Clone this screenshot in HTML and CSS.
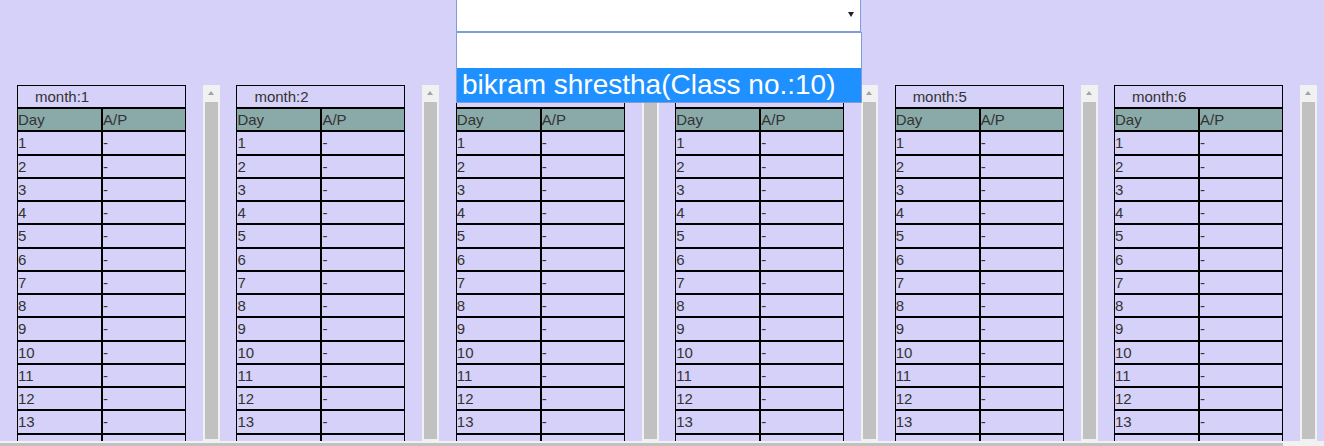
FILE: index.html
```html
<!DOCTYPE html>
<html>
<head>
<meta charset="utf-8">
<link rel="stylesheet" href="styles.css">
</head>
<body>
<div class="page">
  <div class="top">
    <div class="select"><span class="caret"></span></div>
    <div class="listbox">
      <div class="option"></div>
      <div class="option selected">bikram shrestha(Class no.:10)</div>
    </div>
  </div>
  <div class="panels" id="panels"></div>
</div>
<div class="hscroll"><div class="hthumb"></div></div>
<script src="app.js"></script>
</body>
</html>
```
FILE: app.js
```js
(function () {
  var wrap = document.getElementById('panels');
  var html = '';
  for (var m = 1; m <= 6; m++) {
    html += '<div class="panel"><table class="att"><colgroup><col class="c1"><col class="c2"></colgroup>';
    html += '<tr><th colspan="2" class="month">month:' + m + '</th></tr>';
    html += '<tr class="head"><td>Day</td><td>A/P</td></tr>';
    for (var d = 1; d <= 16; d++) {
      html += '<tr><td>' + d + '</td><td>-</td></tr>';
    }
    html += '</table><div class="vscroll"><div class="arrow"></div><div class="thumb"></div></div></div>';
  }
  wrap.innerHTML = html;
})();
```
FILE: styles.css
```css
html, body {
  margin: 0;
  padding: 0;
}
body {
  background: #d5d1f8;
  font-family: "Liberation Sans", Arial, sans-serif;
  color: #333;
  overflow: hidden;
  width: 1324px;
  height: 446px;
}
.page {
  height: 441px;
  overflow: hidden;
}
.top {
  height: 85px;
  position: relative;
}
.select {
  margin-left: 456px;
  width: 403px;
  height: 31px;
  background: #fff;
  border: 1px solid #7f9ddc;
  border-top: none;
  position: relative;
}
.caret {
  position: absolute;
  left: 391px;
  top: 12px;
  width: 0;
  height: 0;
  border-left: 3px solid transparent;
  border-right: 3px solid transparent;
  border-top: 5px solid #222;
}
.listbox {
  position: absolute;
  left: 456px;
  top: 32px;
  width: 404px;
  background: #fff;
  border: 1px solid #7f9ddc;
  z-index: 5;
}
.option {
  height: 35px;
  font-size: 28px;
  line-height: 34px;
  padding-left: 5px;
  color: #000;
}
.option.selected {
  height: 34px;
  background: #1e90ff;
  color: #fff;
}
.panels {
  display: flex;
  gap: 16.4px;
  padding-left: 17px;
}
.panel {
  display: flex;
  align-items: flex-start;
  gap: 17px;
  flex: none;
}
.att {
  border-collapse: separate;
  border-spacing: 0;
  table-layout: fixed;
  width: 169px;
  font-size: 15px;
  flex: none;
}
.c1 { width: 85px; }
.c2 { width: 84px; }
.att td, .att th {
  border: 1px solid #000;
  padding: 2px 0 2px 0;
  line-height: 17.24px;
  text-align: left;
  font-weight: normal;
  white-space: nowrap;
  overflow: hidden;
}
.att th.month {
  padding-left: 17px;
}
.att tr.head td {
  background: #8aa9a9;
}
.vscroll {
  width: 17px;
  height: 356px;
  background: #f1f1f1;
  flex: none;
  display: flex;
  flex-direction: column;
  align-items: center;
}
.arrow {
  height: 17px;
  width: 17px;
  position: relative;
  flex: none;
}
.arrow::after {
  content: "";
  position: absolute;
  left: 5px;
  top: 6px;
  border-left: 3.5px solid transparent;
  border-right: 3.5px solid transparent;
  border-bottom: 4px solid #a3a3a3;
}
.thumb {
  width: 13px;
  flex: 1;
  margin-bottom: 2px;
  background: #c1c1c1;
}
.hscroll {
  position: fixed;
  left: 0;
  top: 441px;
  width: 1324px;
  height: 5px;
  background: #f1f1f1;
}
.hthumb {
  margin-top: 2px;
  width: 1283px;
  height: 3px;
  background: #c1c1c1;
}
```
